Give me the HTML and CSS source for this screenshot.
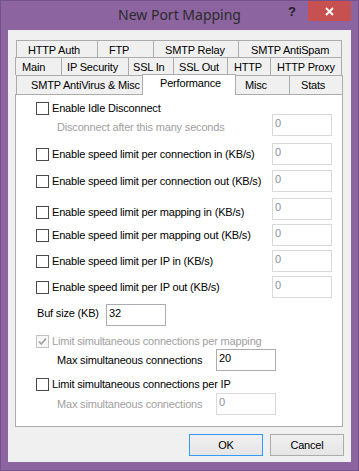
FILE: index.html
```html
<!DOCTYPE html>
<html>
<head>
<meta charset="utf-8">
<title>New Port Mapping</title>
<link rel="stylesheet" href="styles.css">
</head>
<body>
<div class="window">
  <div class="titlebar">
    <span class="title">New Port Mapping</span>
    <span class="help">?</span>
    <div class="close">
      <svg width="9" height="9" viewBox="0 0 9 9"><path d="M1 1 L8 8 M8 1 L1 8" stroke="#fff" stroke-width="1.8" fill="none"/></svg>
    </div>
  </div>
  <div class="client">
    <div class="tabs">
      <div class="tabrow r1">
        <div class="tab t-httpauth">HTTP Auth</div>
        <div class="tab t-ftp">FTP</div>
        <div class="tab t-relay">SMTP Relay</div>
        <div class="tab t-antispam">SMTP AntiSpam</div>
      </div>
      <div class="tabrow r2">
        <div class="tab t-main">Main</div>
        <div class="tab t-ipsec">IP Security</div>
        <div class="tab t-sslin">SSL In</div>
        <div class="tab t-sslout">SSL Out</div>
        <div class="tab t-http">HTTP</div>
        <div class="tab t-proxy">HTTP Proxy</div>
      </div>
      <div class="tabrow r3">
        <div class="tab t-antivirus">SMTP AntiVirus &amp; Misc</div>
        <div class="tab t-perf sel">Performance</div>
        <div class="tab t-misc">Misc</div>
        <div class="tab t-stats">Stats</div>
      </div>
    </div>
    <div class="panel">
      <div class="row short">
        <div class="check"><span class="cb"></span><span class="lbl">Enable Idle Disconnect</span></div>
      </div>
      <div class="row gap-n1">
        <span class="lbl indent dim low">Disconnect after this many seconds</span>
        <span class="edit dis push">0</span>
      </div>
      <div class="row gap7">
        <div class="check"><span class="cb"></span><span class="lbl">Enable speed limit per connection in (KB/s)</span></div>
        <span class="edit dis push">0</span>
      </div>
      <div class="row gap5">
        <div class="check"><span class="cb"></span><span class="lbl">Enable speed limit per connection out (KB/s)</span></div>
        <span class="edit dis push">0</span>
      </div>
      <div class="row gap6">
        <div class="check lower"><span class="cb"></span><span class="lbl">Enable speed limit per mapping in (KB/s)</span></div>
        <span class="edit dis push">0</span>
      </div>
      <div class="row gap4">
        <div class="check"><span class="cb"></span><span class="lbl">Enable speed limit per mapping out (KB/s)</span></div>
        <span class="edit dis push">0</span>
      </div>
      <div class="row gap4">
        <div class="check"><span class="cb"></span><span class="lbl">Enable speed limit per IP in (KB/s)</span></div>
        <span class="edit dis push">0</span>
      </div>
      <div class="row gap4">
        <div class="check"><span class="cb"></span><span class="lbl">Enable speed limit per IP out (KB/s)</span></div>
        <span class="edit dis push">0</span>
      </div>
      <div class="row gap6">
        <span class="lbl buf-label">Buf size (KB)</span>
        <span class="edit">32</span>
      </div>
      <div class="row short gap9">
        <div class="check"><span class="cb cb-dis"><svg width="11" height="11" viewBox="0 0 11 11"><path d="M2 5.5 L4.3 8 L9 2.5" stroke="#a3a3a3" stroke-width="1.8" fill="none"/></svg></span><span class="lbl dim">Limit simultaneous connections per mapping</span></div>
      </div>
      <div class="row gap1">
        <span class="lbl indent max-label">Max simultaneous connections</span>
        <span class="edit">20</span>
      </div>
      <div class="row short gap7">
        <div class="check"><span class="cb"></span><span class="lbl">Limit simultaneous connections per IP</span></div>
      </div>
      <div class="row gap2">
        <span class="lbl indent max-label dim">Max simultaneous connections</span>
        <span class="edit dis">0</span>
      </div>
    </div>
    <div class="buttons">
      <button class="btn default">OK</button>
      <button class="btn">Cancel</button>
    </div>
  </div>
</div>
</body>
</html>
```
FILE: styles.css
```css
* { box-sizing: border-box; }

body {
  margin: 0;
  font-family: "Liberation Sans", Arial, sans-serif;
  font-size: 11px;
  letter-spacing: -0.18px;
  color: #000;
}

.window {
  width: 359px;
  height: 471px;
  background: #8c64a0;
  box-shadow: inset 0 0 0 1px #74538a;
  padding: 0 8px 9px 8px;
  display: flex;
  flex-direction: column;
}

.titlebar {
  height: 30px;
  position: relative;
  text-align: center;
  font-family: "Noto Sans", sans-serif;
  font-size: 14px;
  line-height: 30px;
  letter-spacing: 0;
  color: #2b2b2b;
}

.help {
  position: absolute;
  right: 55px;
  top: 5px;
  font-family: "Liberation Sans", sans-serif;
  font-weight: bold;
  font-size: 13px;
  line-height: 13px;
  color: #1e1e1e;
}

.close {
  position: absolute;
  right: 0;
  top: 1px;
  width: 43px;
  height: 20px;
  background: #c75050;
  display: flex;
  align-items: center;
  justify-content: center;
}

.client {
  flex: 1;
  background: #f0f0f0;
  padding: 10px 8px 0 7px;
  display: flex;
  flex-direction: column;
}

/* tabs */
.tabrow {
  display: flex;
  position: relative;
}
.tabrow.r1 { height: 17px; margin-left: 1px; }
.tabrow.r2 { height: 18px; }
.tabrow.r3 { height: 19px; margin-left: 1px; z-index: 1; }

.tab {
  height: 100%;
  border: 1px solid #acacac;
  border-bottom: none;
  background: #f0f0f0;
  padding-top: 3px;
  line-height: 13px;
  white-space: nowrap;
  margin-left: -1px;
  flex: none;
  overflow: hidden;
}
.tab:first-child { margin-left: 0; }

.tab.sel {
  background: #fff;
  height: 21px;
  margin-top: -1px;
  padding-top: 2px;
}

.t-httpauth { width: 82px; padding-left: 11px; }
.t-ftp { width: 57px; padding-left: 11px; }
.t-relay { width: 86px; padding-left: 11px; }
.t-antispam { width: 104px; padding-left: 12px; }

.t-main { width: 47px; padding-left: 6px; }
.t-ipsec { width: 68px; padding-left: 5px; }
.t-sslin { width: 46px; padding-left: 4px; }
.t-sslout { width: 55px; padding-left: 5px; }
.t-http { width: 44px; padding-left: 6px; }
.t-proxy { width: 72px; padding-left: 6px; }

.t-antivirus { width: 127px; padding-left: 14px; }
.t-perf { width: 94px; padding-left: 17px; }
.t-misc { width: 55px; padding-left: 9px; }
.t-stats { width: 54px; padding-left: 11px; }

/* panel */
.panel {
  height: 333px;
  background: #fff;
  border: 1px solid #acacac;
  padding: 7px 10px 0 20px;
}

.row {
  display: flex;
  align-items: center;
  height: 22px;
}
.row.short { height: 13px; }

.gap-n1 { margin-top: -1px; }
.gap1 { margin-top: 1px; }
.gap2 { margin-top: 2px; }
.gap4 { margin-top: 4px; }
.gap5 { margin-top: 5px; }
.gap6 { margin-top: 6px; }
.gap7 { margin-top: 7px; }
.gap9 { margin-top: 9px; }

.check {
  display: flex;
  align-items: center;
}
.check.lower { padding-top: 7px; }

.cb {
  width: 13px;
  height: 13px;
  border: 1px solid #4a4a4a;
  background: #fff;
  margin-right: 3px;
  flex: none;
  display: flex;
  align-items: center;
  justify-content: center;
}
.cb.cb-dis {
  border-color: #c2c2c2;
  background: #f7f7f7;
}

.lbl {
  line-height: 13px;
  white-space: nowrap;
}
.indent { padding-left: 21px; }
.dim { color: #a0a0a0; }
.low { padding-top: 4px; }

.buf-label {
  width: 70px;
  padding-left: 1px;
  padding-bottom: 4px;
}
.max-label { width: 180px; }

.edit {
  width: 60px;
  height: 22px;
  border: 1px solid #abadb3;
  background: #fff;
  padding: 2px 2px 0 2px;
  line-height: 13px;
  flex: none;
}
.edit.dis {
  border-color: #d9d9d9;
  color: #8791a5;
}
.push { margin-left: auto; }

/* buttons */
.buttons {
  display: flex;
  justify-content: flex-end;
  gap: 7px;
  margin-top: 7px;
  margin-right: -1px;
}
.btn {
  width: 74px;
  height: 22px;
  border: 1px solid #acacac;
  background: linear-gradient(#f0f0f0, #e5e5e5);
  font: inherit;
  letter-spacing: inherit;
  color: #000;
  padding: 0;
}
.btn.default { border-color: #3399ff; }
```
